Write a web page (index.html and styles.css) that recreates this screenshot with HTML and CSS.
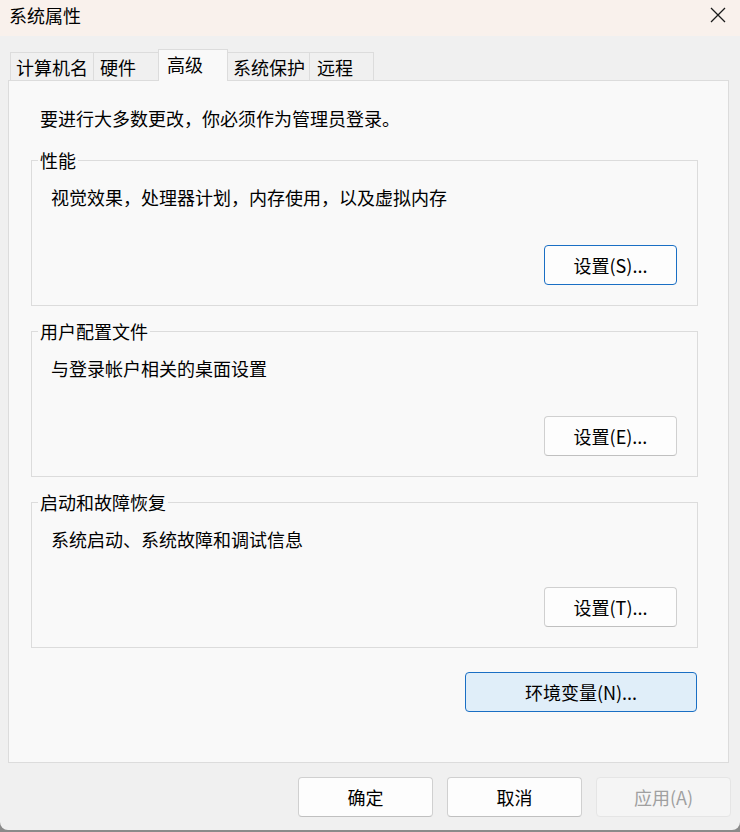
FILE: index.html
```html
<!DOCTYPE html>
<html lang="zh-CN">
<head>
<meta charset="utf-8">
<title>系统属性</title>
<link rel="stylesheet" href="styles.css">
</head>
<body>
<div class="window">
  <div class="titlebar">
    <span class="title">系统属性</span>
    <svg class="close" width="16" height="16" viewBox="0 0 16 16"><path d="M1 1 L15 15 M15 1 L1 15" stroke="#1a1a1a" stroke-width="1.3" fill="none"/></svg>
  </div>
  <div class="tabs">
    <div class="tab tab-w1">计算机名</div>
    <div class="tab tab-w2">硬件</div>
    <div class="tab tab-active">高级</div>
    <div class="tab tab-w4">系统保护</div>
    <div class="tab tab-w5">远程</div>
  </div>
  <div class="pane">
    <p class="intro">要进行大多数更改，你必须作为管理员登录。</p>
    <div class="group">
      <span class="legend">性能</span>
      <p class="desc">视觉效果，处理器计划，内存使用，以及虚拟内存</p>
      <div class="group-actions"><button class="btn btn-default">设置(S)...</button></div>
    </div>
    <div class="group group-next">
      <span class="legend">用户配置文件</span>
      <p class="desc">与登录帐户相关的桌面设置</p>
      <div class="group-actions"><button class="btn">设置(E)...</button></div>
    </div>
    <div class="group group-next">
      <span class="legend">启动和故障恢复</span>
      <p class="desc">系统启动、系统故障和调试信息</p>
      <div class="group-actions"><button class="btn">设置(T)...</button></div>
    </div>
    <div class="env-row"><button class="btn btn-env">环境变量(N)...</button></div>
  </div>
  <div class="footer">
    <button class="btn btn-foot">确定</button>
    <button class="btn btn-foot">取消</button>
    <button class="btn btn-foot btn-disabled">应用(A)</button>
  </div>
</div>
</body>
</html>
```
FILE: styles.css
```css
* { box-sizing: border-box; }
html, body { margin: 0; padding: 0; }
body {
  background: #8a8a8a;
  font-family: "Noto Sans CJK SC", "Noto Sans", sans-serif;
  font-size: 18px;
  color: #000;
  width: 740px;
  height: 832px;
  overflow: hidden;
  text-spacing-trim: space-all;
}
.window {
  width: 740px;
  height: 830px;
  background: #f0f0f0;
  border-radius: 0 0 8px 8px;
  overflow: hidden;
}
.titlebar {
  height: 36px;
  background: #f9f1ec;
  display: flex;
  justify-content: space-between;
  align-items: flex-start;
  padding: 3px 14px 0 9px;
}
.title {
  font-size: 18px;
  line-height: 24px;
  color: #000;
}
.close { margin-top: 4px; }
.tabs {
  display: flex;
  align-items: flex-end;
  padding-left: 11px;
  margin-top: 13px;
  height: 31px;
}
.tab {
  height: 28px;
  border: 1px solid #dcdcdc;
  border-bottom: none;
  margin-left: -1px;
  background: #f0f0f0;
  display: flex;
  align-items: center;
  padding-left: 5px;
  line-height: 24px;
  white-space: nowrap;
}
.tab-w1 { width: 84px; }
.tab-w2 { width: 66px; padding-left: 6px; }
.tab-w4 { width: 83px; }
.tab-w5 { width: 65px; padding-left: 7px; }
.tab-active {
  width: 70px;
  height: 32px;
  margin-bottom: -1px;
  background: #f9f9f9;
  position: relative;
  z-index: 1;
  padding-left: 8px;
  padding-bottom: 4px;
}
.pane {
  margin-left: 8px;
  width: 721px;
  height: 683px;
  background: #f9f9f9;
  border: 1px solid #dcdcdc;
  padding: 25px 0 0 0;
}
.intro {
  margin: 0 0 30px 31px;
  line-height: 24px;
}
.group {
  position: relative;
  margin-left: 22px;
  width: 667px;
  border: 1px solid #dcdcdc;
  padding: 24px 20px 20px 19px;
}
.group-next { margin-top: 25px; }
.legend {
  position: absolute;
  top: -13px;
  left: 6px;
  padding: 0 2px;
  line-height: 24px;
  background: #f9f9f9;
}
.desc {
  margin: 0 0 36px 0;
  line-height: 24px;
}
.group-actions {
  display: flex;
  justify-content: flex-end;
}
.btn {
  font-family: "Noto Sans CJK SC", "Noto Sans", sans-serif;
  font-size: 18px;
  color: #000;
  height: 40px;
  width: 133px;
  background: #fdfdfd;
  border: 1px solid #d0d0d0;
  border-bottom-color: #c0c0c0;
  border-radius: 4px;
  padding: 0;
  line-height: 24px;
  text-spacing-trim: space-all;
}
.btn-default {
  border: 1px solid #1a6fc4;
}
.env-row {
  display: flex;
  justify-content: flex-end;
  margin: 24px 31px 0 0;
}
.btn-env {
  width: 232px;
  background: #e0eef9;
  border: 1px solid #1a6fc4;
}
.footer {
  display: flex;
  justify-content: flex-end;
  gap: 14px;
  padding: 14px 9px 0 0;
}
.btn-foot { width: 135px; }
.btn-disabled {
  background: #f5f5f5;
  border: 1px solid #e5e5e5;
  color: #a0a0a0;
}
```
